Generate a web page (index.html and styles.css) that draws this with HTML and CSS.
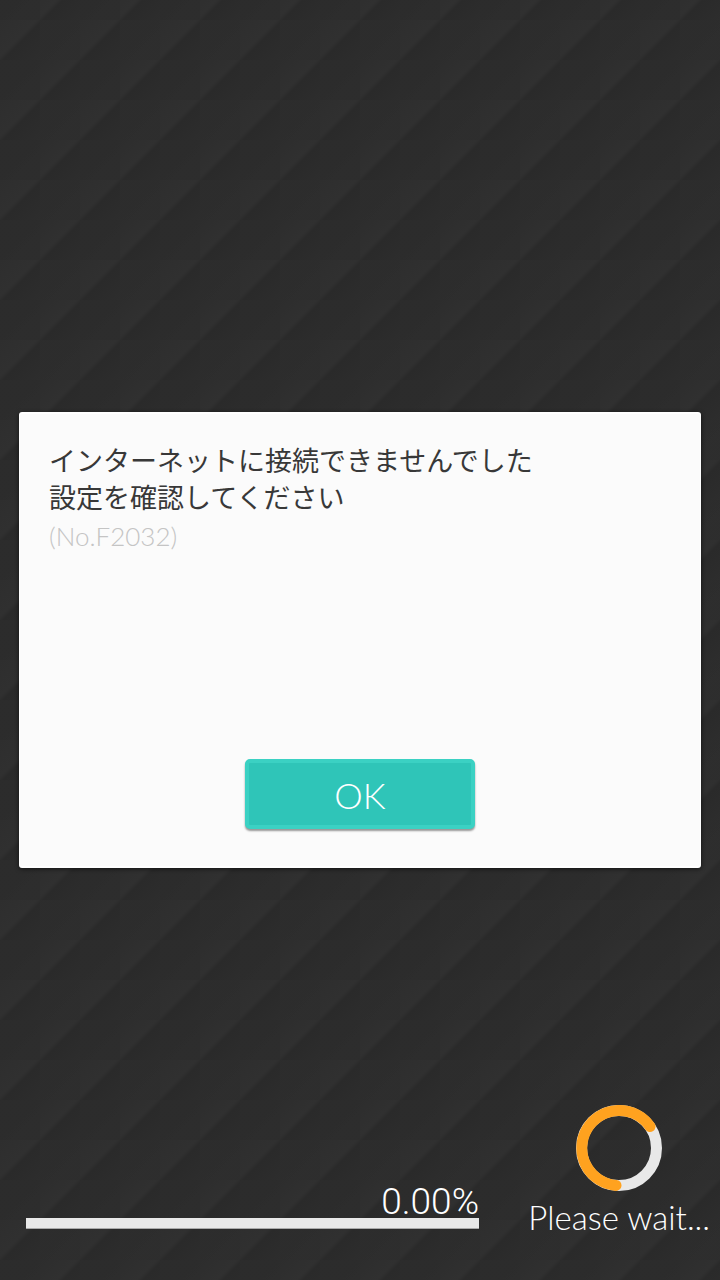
FILE: index.html
```
<!DOCTYPE html>
<html lang="ja">
<head>
<meta charset="utf-8">
<meta name="viewport" content="width=device-width, initial-scale=1">
<title>インターネットに接続できませんでした</title>
<link rel="stylesheet" href="styles.css">
</head>
<body class="screen">
<main class="dialog" role="alertdialog" aria-labelledby="message">
  <div class="dialog-text">
    <p class="message" id="message">インターネットに接続できませんでした<br>設定を確認してください</p>
    <p class="code">(No.F2032)</p>
  </div>
  <button class="ok" type="button">OK</button>
</main>
<footer class="status">
  <div class="progress">
    <span class="percent" id="percent">0.00%</span>
    <div class="bar" role="progressbar" aria-labelledby="percent" aria-valuenow="0"></div>
  </div>
  <div class="loading">
    <svg class="spinner" viewBox="0 0 86 86" aria-hidden="true">
      <circle class="ring" cx="43" cy="43" r="37.5"/>
      <path class="arc" d="M74 21.5A37.5 37.5 0 1 0 40 80.4"/>
    </svg>
    <span class="wait">Please wait...</span>
  </div>
</footer>
</body>
</html>
```
FILE: styles.css
```
* {
  box-sizing: border-box;
}

.screen {
  margin: 0;
  min-height: 100vh;
  display: grid;
  grid-template-rows: 1fr auto 1fr;
  font-family: Lato, "Noto Sans CJK JP", sans-serif;
  font-weight: 300;
  background-color: #2c2c2c;
  background-image:
    conic-gradient(rgba(45, 45, 45, 0.7) 25%, transparent 25% 50%, rgba(44, 44, 44, 0.7) 50% 75%, transparent 75%),
    linear-gradient(135deg, #2e2e2e, #303030 23%, #2a2a2a 27%, #2d2d2d 50%, #303030 73%, #2a2a2a 77%, #2d2d2d);
  background-size: 80px 80px;
  background-position: 0 20px;
}

.dialog {
  grid-row: 2;
  margin: 0 19px;
  min-height: 456px;
  padding: 27px 29px 37px;
  display: flex;
  flex-direction: column;
  justify-content: space-between;
  align-items: center;
  background: #fbfbfb;
  border: 1px solid #fff;
  border-width: 2px 1px;
  border-radius: 3px;
  box-shadow: 0 1px 4px rgba(0, 0, 0, 0.6);
}

.dialog-text {
  align-self: stretch;
}

.message {
  margin: 0;
  color: #383838;
  font-family: "Noto Sans CJK JP", sans-serif;
  font-size: 27px;
  font-weight: 400;
  line-height: 37px;
}

.code {
  margin: 0;
  color: #c4c4c4;
  font-size: 26px;
  line-height: 42px;
}

.ok {
  width: 230px;
  height: 70px;
  padding: 2px 0 0;
  color: #fff;
  background: #2fc5b8;
  border: 4px solid #3bd1c3;
  border-radius: 5px;
  box-shadow: 0 2px 2px rgba(0, 0, 0, 0.4);
  font: inherit;
  font-size: 36px;
  line-height: 44px;
}

.status {
  grid-row: 3;
  display: flex;
  justify-content: space-between;
  align-items: flex-end;
  padding: 0 10px 36px 26px;
  color: #fff;
}

.progress {
  flex: 0 1 453px;
  display: flex;
  flex-direction: column;
  margin-bottom: 15px;
}

.percent {
  align-self: flex-end;
  font-family: Roboto, sans-serif;
  font-size: 37px;
  line-height: 32px;
}

.bar {
  height: 11px;
  background: #e9e9e9;
  border-bottom: 1px solid #aaa;
}

.loading {
  display: flex;
  flex-direction: column;
  align-items: center;
}

.spinner {
  width: 86px;
  height: 86px;
  fill: none;
  stroke-width: 11;
}

.ring {
  stroke: #e8e8e8;
}

.arc {
  stroke: #ffa21f;
  stroke-linecap: round;
}

.wait {
  font-size: 33px;
  line-height: 53px;
  white-space: nowrap;
}
```
